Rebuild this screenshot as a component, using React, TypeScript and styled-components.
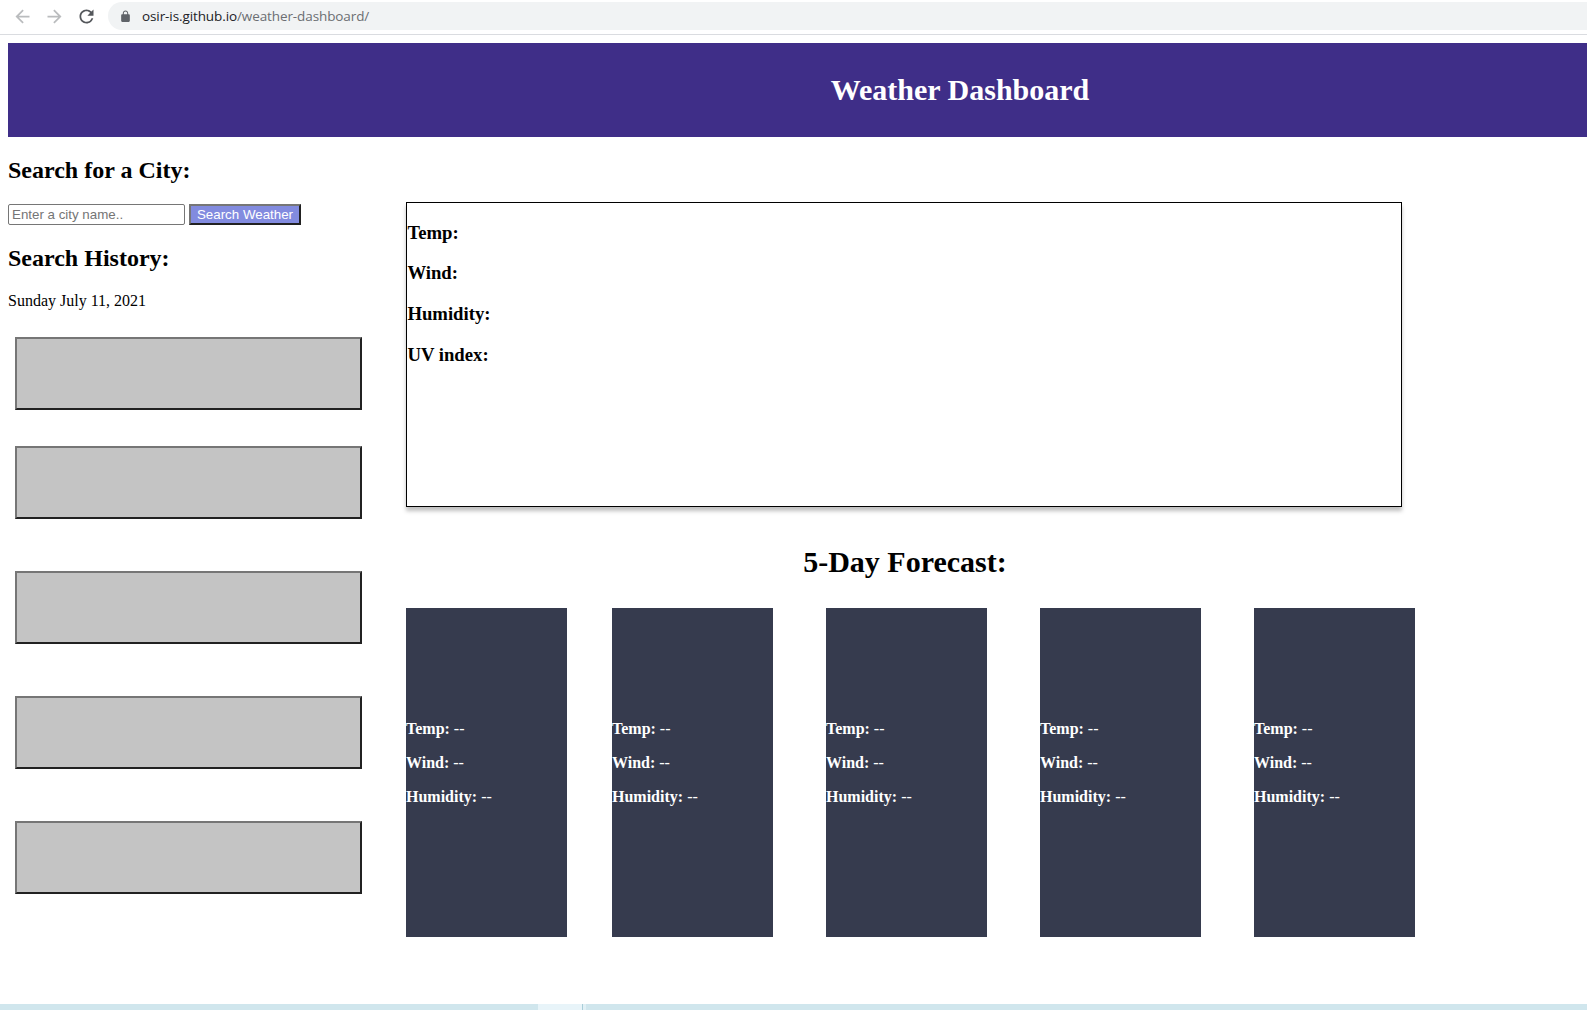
import React from "react";
import styled, { createGlobalStyle } from "styled-components";

const GlobalStyle = createGlobalStyle`
  html, body { margin: 0; padding: 0; background: #fff; overflow: hidden; }
  * { box-sizing: border-box; }
`;

const Screen = styled.div`
  display: flex;
  flex-direction: column;
  width: 100%;
  height: 1010px;
  overflow: hidden;
  color: #000;
  font-family: "Liberation Serif", "Times New Roman", serif;
  font-size: 16px;
  line-height: 18px;
`;

const Toolbar = styled.div`
  display: flex;
  align-items: flex-start;
  flex: none;
  height: 35px;
  padding-left: 11.5px;
  border-bottom: 1px solid #dadce0;
`;

const NavIcon = styled.svg<{ $active?: boolean }>`
  flex: none;
  width: 21px;
  height: 21px;
  margin: 5.5px 11px 0 0;
  fill: ${(p) => (p.$active ? "#54575b" : "#babcbe")};
`;

const AddressBar = styled.div`
  display: flex;
  align-items: center;
  flex: 1;
  height: 28px;
  margin-top: 2px;
  margin-left: 0.5px;
  padding-left: 11px;
  border-radius: 14px 0 0 14px;
  background: #f1f3f4;
  color: #6b6e72;
  font-family: "Open Sans", "Noto Sans", sans-serif;
  font-size: 13.5px;
  letter-spacing: -0.1px;
  line-height: 28px;
  white-space: nowrap;
`;

const LockIcon = styled.svg`
  width: 13px;
  height: 13px;
  margin-right: 10px;
  fill: #5f6368;
`;

const Host = styled.span`
  color: #202124;
`;

const Page = styled.div`
  display: flex;
  flex-direction: column;
  flex: 1;
  padding: 8px 0 0 8px;
`;

const Header = styled.header`
  flex: none;
  width: 1904px;
  height: 94px;
  padding-top: 29px;
  background: #3f2e88;
  color: #fff;
  text-align: center;
`;

const Title = styled.h1`
  margin: 0;
  font-size: 30px;
  line-height: 36px;
`;

const Columns = styled.div`
  display: flex;
`;

const Sidebar = styled.aside`
  flex: none;
  width: 398px;
`;

const Heading = styled.h2`
  margin: 20px 0;
  font-size: 24px;
  line-height: 27px;
`;

const SearchForm = styled.div`
  display: flex;
  gap: 4px;
`;

const CityInput = styled.input`
  width: 177px;
  height: 21px;
  padding: 1px 2px 1px 3px;
  border: 1px solid #767676;
  border-radius: 2px;
  font: 13.333px "Liberation Sans", Arial, sans-serif;
  &::placeholder { color: #757575; }
`;

const SearchButton = styled.button`
  width: 112px;
  height: 21px;
  padding: 0;
  border: 2px solid;
  border-color: #767676 #212121 #212121 #767676;
  border-radius: 0;
  background: #828bdf;
  color: #fff;
  font: 13.333px "Liberation Sans", Arial, sans-serif;
  white-space: nowrap;
`;

const DateLine = styled.p`
  margin: 0 0 27px;
`;

const HistoryList = styled.div`
  display: flex;
  flex-direction: column;
  gap: 52px;
  padding-left: 7px;
`;

const HistoryButton = styled.button<{ $tight?: boolean }>`
  width: 347px;
  height: 73px;
  margin: 0 0 ${(p) => (p.$tight ? "-16px" : "0")};
  border: 2px solid;
  border-color: #767676 #212121 #212121 #767676;
  border-radius: 0;
  background: #c4c4c4;
`;

const Main = styled.main`
  flex: none;
  width: 996px;
  padding-top: 65px;
`;

const Current = styled.section`
  height: 305px;
  padding: 18.7px 0 0 0.4px;
  border: 1px solid #000;
  box-shadow: 0 4px 4px rgba(0, 0, 0, 0.25);
`;

const Metric = styled.h3`
  margin: 0 0 18.72px;
  font-size: 18.72px;
  line-height: 22px;
`;

const ForecastTitle = styled.h1`
  margin: 37px 0 28px;
  padding-left: 2px;
  font-size: 30px;
  line-height: 36px;
  text-align: center;
`;

const Cards = styled.div`
  display: flex;
  gap: 53px;
`;

const Card = styled.article<{ $first?: boolean }>`
  display: flex;
  flex-direction: column;
  flex: none;
  gap: 16px;
  width: 161px;
  height: 329px;
  margin-right: ${(p) => (p.$first ? "-8px" : "0")};
  padding-top: 112px;
  background: #363b4e;
  color: #fff;
`;

const Reading = styled.div`
  height: 18px;
`;

const Taskbar = styled.div`
  display: flex;
  flex: none;
  height: 6px;
  background: #d0e6ed;
`;

const TaskButton = styled.div`
  width: 48px;
  margin-left: 538px;
  background: linear-gradient(
    to right,
    #e8f4f9 44px,
    #a9cdd8 44px,
    #a9cdd8 45px,
    #e1f0f5 45px
  );
`;

const METRICS = ["Temp:", "Wind:", "Humidity:", "UV index:"];
const READINGS = ["Temp:", "Wind:", "Humidity:"];
const SLOTS = [0, 1, 2, 3, 4];

export default function App() {
  return (
    <Screen>
      <GlobalStyle />
      <Toolbar>
        <NavIcon viewBox="0 0 24 24">
          <path d="M20 11H7.83l5.59-5.59L12 4l-8 8 8 8 1.41-1.41L7.83 13H20v-2z" />
        </NavIcon>
        <NavIcon viewBox="0 0 24 24">
          <path d="M4 11h12.17l-5.59-5.59L12 4l8 8-8 8-1.41-1.41L16.17 13H4v-2z" />
        </NavIcon>
        <NavIcon $active viewBox="0 0 24 24">
          <path d="M17.65 6.35A7.958 7.958 0 0 0 12 4c-4.42 0-7.99 3.58-7.99 8s3.57 8 7.99 8c3.73 0 6.84-2.55 7.73-6h-2.08A5.99 5.99 0 0 1 12 18c-3.31 0-6-2.69-6-6s2.69-6 6-6c1.66 0 3.14.69 4.22 1.78L13 11h7V4l-2.35 2.35z" />
        </NavIcon>
        <AddressBar>
          <LockIcon viewBox="0 0 24 24">
            <path d="M18 8h-1V6c0-2.76-2.24-5-5-5S7 3.24 7 6v2H6c-1.1 0-2 .9-2 2v10c0 1.1.9 2 2 2h12c1.1 0 2-.9 2-2V10c0-1.1-.9-2-2-2zM8.9 8V6c0-1.71 1.39-3.1 3.1-3.1s3.1 1.39 3.1 3.1v2H8.9z" />
          </LockIcon>
          <Host>osir-is.github.io</Host>/weather-dashboard/
        </AddressBar>
      </Toolbar>

      <Page>
        <Header>
          <Title>Weather Dashboard</Title>
        </Header>
        <Columns>
          <Sidebar>
            <Heading>Search for a City:</Heading>
            <SearchForm>
              <CityInput placeholder="Enter a city name.." />
              <SearchButton>Search Weather</SearchButton>
            </SearchForm>
            <Heading>Search History:</Heading>
            <DateLine>Sunday July 11, 2021</DateLine>
            <HistoryList>
              {SLOTS.map((i) => (
                <HistoryButton key={i} $tight={i === 0} />
              ))}
            </HistoryList>
          </Sidebar>
          <Main>
            <Current>
              {METRICS.map((m) => (
                <Metric key={m}>{m}</Metric>
              ))}
            </Current>
            <ForecastTitle>5-Day Forecast:</ForecastTitle>
            <Cards>
              {SLOTS.map((i) => (
                <Card key={i} $first={i === 0}>
                  {READINGS.map((r) => (
                    <Reading key={r}>
                      <b>{r}</b> --
                    </Reading>
                  ))}
                </Card>
              ))}
            </Cards>
          </Main>
        </Columns>
      </Page>

      <Taskbar>
        <TaskButton />
      </Taskbar>
    </Screen>
  );
}
